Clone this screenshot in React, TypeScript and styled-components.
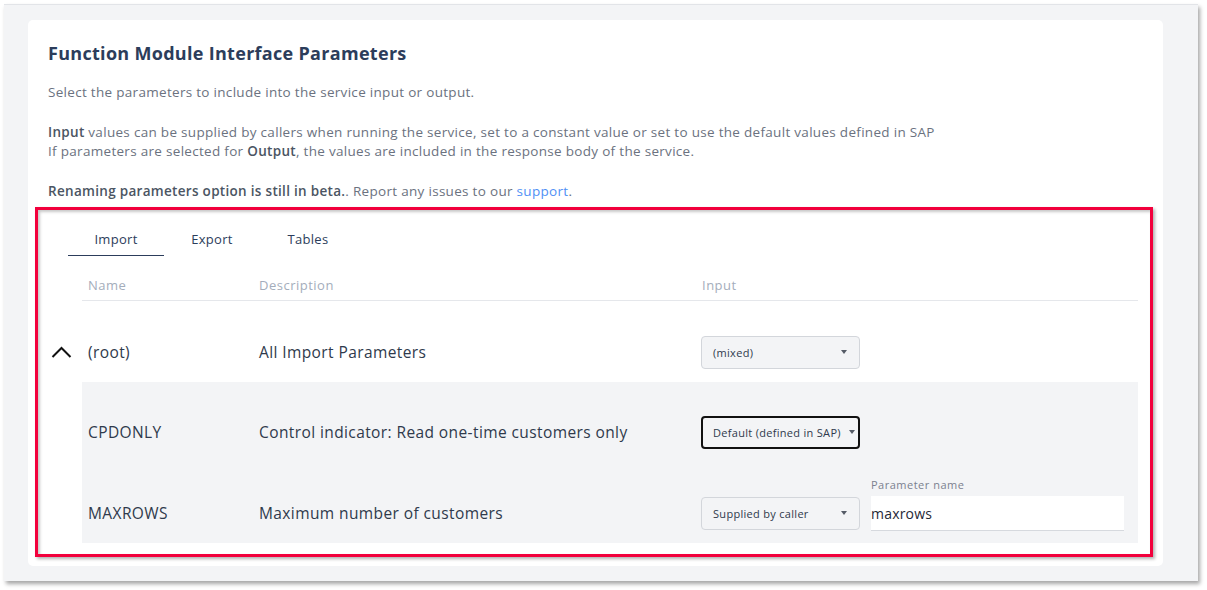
import React from "react";
import styled, { createGlobalStyle } from "styled-components";

const Global = createGlobalStyle`
  html, body { margin: 0; padding: 0; background: #ffffff; }
  body { font-family: "Open Sans", "Noto Sans", sans-serif; }
  * { box-sizing: border-box; }
`;

const Page = styled.div`
  width: 1207px;
  height: 590px;
  padding: 4px 9px 0 4px;
  overflow: hidden;
`;

const Panel = styled.div`
  width: 1194px;
  height: 577px;
  background: #f3f4f6;
  border-top: 1px solid #e2e4e8;
  box-shadow: 2px 3px 4px rgba(0, 0, 0, 0.35);
  padding: 15px 35px 15px 24px;
`;

const Card = styled.div`
  background: #ffffff;
  border-radius: 5px;
  height: 100%;
  padding: 21px 0 9px 0;
  display: flex;
  flex-direction: column;
`;

const Intro = styled.div`
  padding: 0 20px;
`;

const Title = styled.h1`
  margin: 0 0 18px 0;
  font-size: 18px;
  line-height: 24px;
  font-weight: 700;
  color: #2c3d5b;
  letter-spacing: 0.3px;
`;

const Para = styled.p`
  margin: 0 0 20px 0;
  font-size: 13.5px;
  line-height: 19.5px;
  letter-spacing: 0.3px;
  color: #6b7280;
  &:last-child { margin-bottom: 6px; }
`;

const Strong = styled.b`
  font-weight: 600;
  color: #4b5563;
`;

const Link = styled.a`
  color: #4f90f5;
  text-decoration: none;
`;

const Highlight = styled.div`
  margin: 0 10px 0 7px;
  border: 3px solid #f2003c;
  box-shadow: 2px 2px 3px rgba(0, 0, 0, 0.3), inset 2px 2px 3px rgba(0, 0, 0, 0.22);
  padding: 15px 12px 11px 44px;
  flex: 1;
  display: flex;
  flex-direction: column;
`;

const Tabs = styled.div`
  display: flex;
  margin-left: -14px;
`;

const Tab = styled.div<{ $active?: boolean }>`
  width: 96px;
  height: 31px;
  display: flex;
  align-items: center;
  justify-content: center;
  font-size: 13px;
  letter-spacing: 0.3px;
  color: #2c3d5b;
  border-bottom: 1px solid ${(p) => (p.$active ? "#2c3d5b" : "transparent")};
  padding-bottom: 2px;
`;

const HeaderRow = styled.div`
  margin-top: 14px;
  height: 31px;
  display: grid;
  grid-template-columns: 177px 443px 1fr;
  align-items: center;
  border-bottom: 1px solid #e5e7eb;
  font-size: 13px;
  letter-spacing: 0.5px;
  color: #a4adbb;
`;

const HeadCell = styled.div<{ $pad?: number }>`
  padding-left: ${(p) => p.$pad ?? 0}px;
`;

const Row = styled.div<{ $shaded?: boolean; $top: number }>`
  display: grid;
  grid-template-columns: 177px 443px 1fr;
  padding-top: ${(p) => p.$top}px;
  background: ${(p) => (p.$shaded ? "#f3f4f6" : "transparent")};
`;

const Cell = styled.div<{ $pad?: number }>`
  height: 60px;
  display: flex;
  align-items: center;
  padding-left: ${(p) => p.$pad ?? 0}px;
  font-size: 15.5px;
  letter-spacing: 0.4px;
  color: #2f3a4c;
  white-space: nowrap;
`;

const Toggle = styled.span`
  display: inline-flex;
  width: 21px;
  margin-left: -37px;
  margin-right: 16px;
`;

const InputCell = styled.div`
  height: 60px;
  display: flex;
  align-items: center;
  gap: 11px;
  margin-left: -1px;
`;

const Select = styled.div<{ $focused?: boolean }>`
  width: 159px;
  height: 33px;
  border-radius: 4px;
  border: ${(p) => (p.$focused ? "2px solid #111111" : "1px solid #d3d6db")};
  background: #f3f4f6;
  padding: 0 ${(p) => (p.$focused ? 3 : 12)}px 0 ${(p) => (p.$focused ? 10 : 11)}px;
  display: flex;
  align-items: center;
  justify-content: space-between;
  font-size: 11px;
  letter-spacing: 0.3px;
  color: #2f3a4c;
  white-space: nowrap;
`;

const Caret = styled.span`
  width: 0;
  height: 0;
  border-left: 3px solid transparent;
  border-right: 3px solid transparent;
  border-top: 4px solid #555b66;
`;

const Field = styled.div`
  align-self: flex-end;
  margin-bottom: 12px;
  display: flex;
  flex-direction: column;
  gap: 4px;
`;

const FieldLabel = styled.label`
  font-size: 11px;
  line-height: 14px;
  letter-spacing: 0.5px;
  color: #7b8190;
`;

const TextInput = styled.input`
  width: 253px;
  height: 35px;
  border: none;
  border-bottom: 1px solid #d6d9de;
  background: #ffffff;
  padding: 0;
  font-family: inherit;
  font-size: 14px;
  letter-spacing: 0.2px;
  color: #1f2937;
  outline: none;
`;

const Chevron = () => (
  <svg width="21" height="12" viewBox="0 0 21 12" fill="none">
    <polyline points="1.5,11 10.5,2 19.5,11" stroke="#111" strokeWidth="2" />
  </svg>
);

export default function App() {
  return (
    <>
      <Global />
      <Page>
        <Panel>
          <Card>
            <Intro>
              <Title>Function Module Interface Parameters</Title>
              <Para>Select the parameters to include into the service input or output.</Para>
              <Para>
                <Strong>Input</Strong> values can be supplied by callers when running the service, set to a constant value or set to use the default values defined in SAP
                <br />
                If parameters are selected for <Strong>Output</Strong>, the values are included in the response body of the service.
              </Para>
              <Para>
                <Strong>Renaming parameters option is still in beta.</Strong>. Report any issues to our <Link href="#">support</Link>.
              </Para>
            </Intro>
            <Highlight>
              <Tabs>
                <Tab $active>Import</Tab>
                <Tab>Export</Tab>
                <Tab>Tables</Tab>
              </Tabs>
              <HeaderRow>
                <HeadCell $pad={6}>Name</HeadCell>
                <HeadCell>Description</HeadCell>
                <HeadCell>Input</HeadCell>
              </HeaderRow>
              <Row $top={21}>
                <Cell $pad={6}>
                  <Toggle>
                    <Chevron />
                  </Toggle>
                  (root)
                </Cell>
                <Cell>All Import Parameters</Cell>
                <InputCell>
                  <Select>
                    (mixed)
                    <Caret />
                  </Select>
                </InputCell>
              </Row>
              <Row $shaded $top={20}>
                <Cell $pad={6}>CPDONLY</Cell>
                <Cell>Control indicator: Read one-time customers only</Cell>
                <InputCell>
                  <Select $focused>
                    Default (defined in SAP)
                    <Caret />
                  </Select>
                </InputCell>
              </Row>
              <Row $shaded $top={21}>
                <Cell $pad={6}>MAXROWS</Cell>
                <Cell>Maximum number of customers</Cell>
                <InputCell>
                  <Select>
                    Supplied by caller
                    <Caret />
                  </Select>
                  <Field>
                    <FieldLabel>Parameter name</FieldLabel>
                    <TextInput defaultValue="maxrows" />
                  </Field>
                </InputCell>
              </Row>
            </Highlight>
          </Card>
        </Panel>
      </Page>
    </>
  );
}
